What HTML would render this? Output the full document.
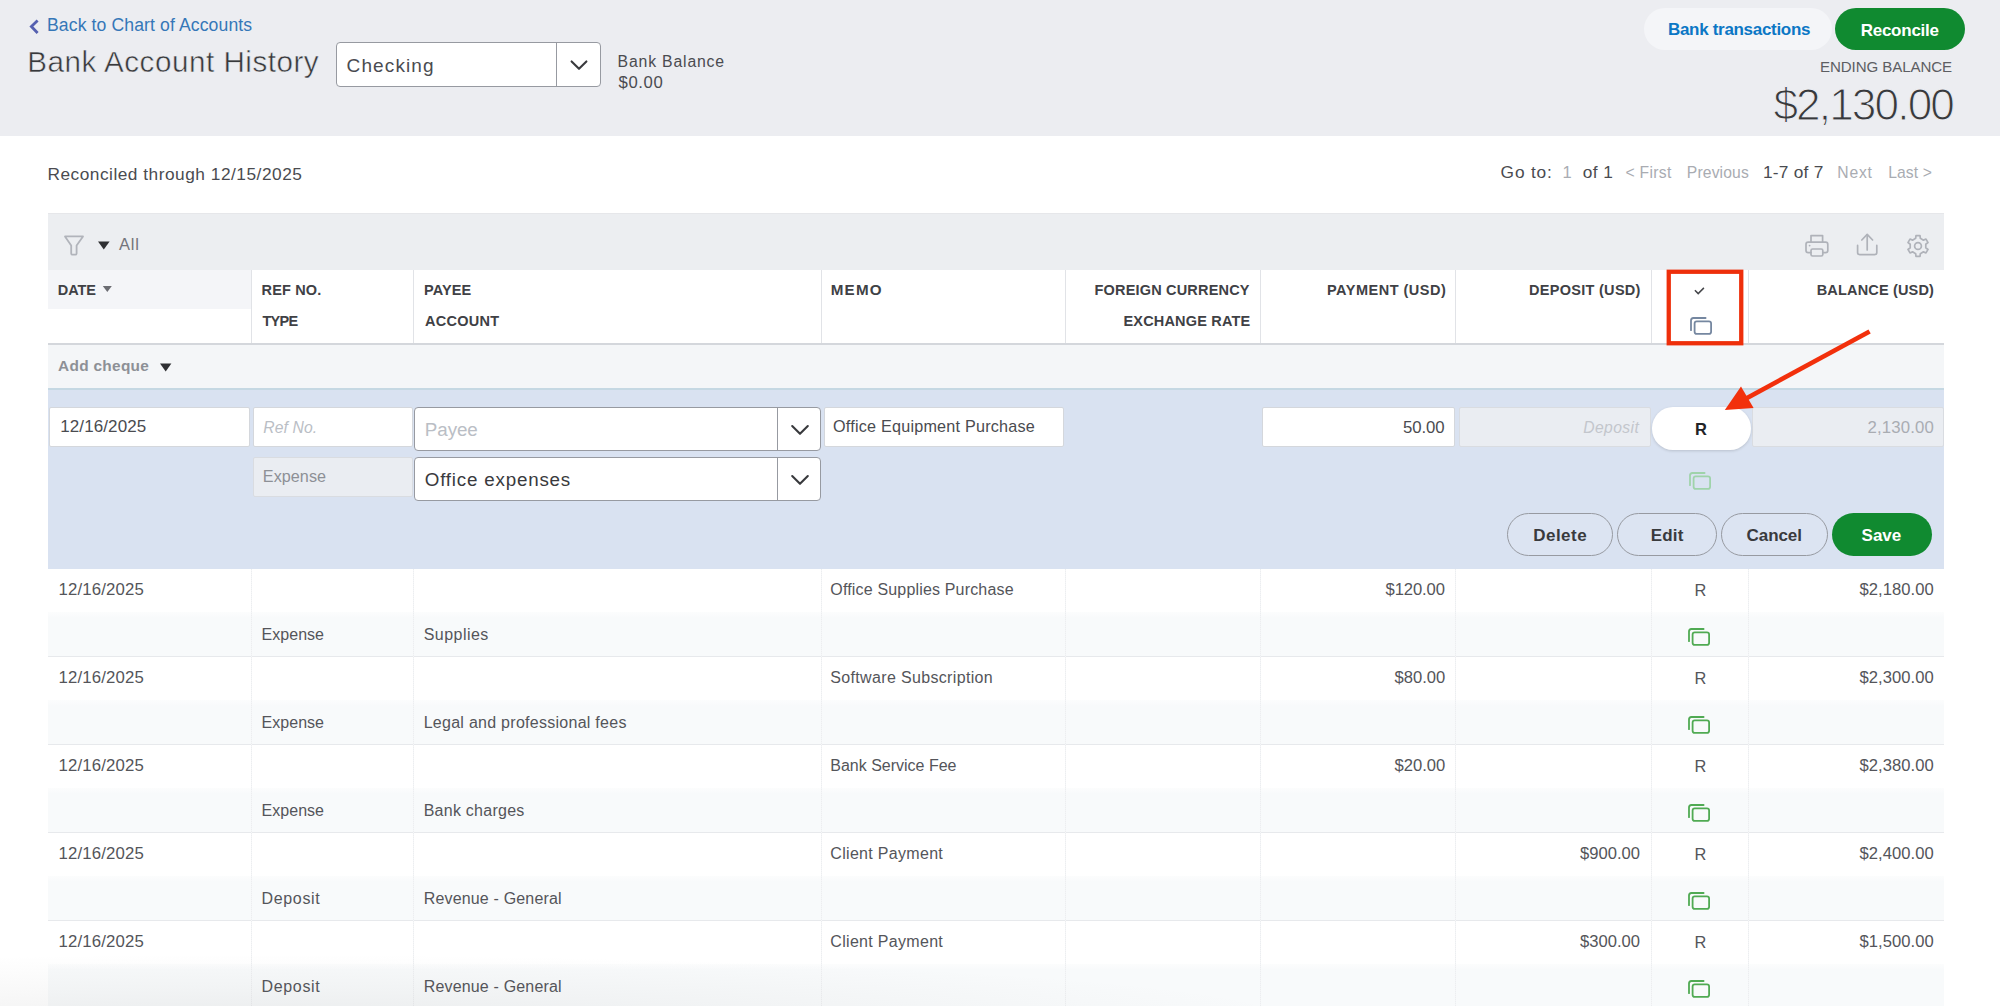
<!DOCTYPE html>
<html lang="en"><head><meta charset="utf-8"><title>Bank Account History</title>
<style>
html,body{margin:0;padding:0;background:#fff;overflow:hidden;}
#pg{position:relative;width:2000px;height:1006px;overflow:hidden;background:#fff;font-family:"Liberation Sans",sans-serif;}
.g{display:contents}
.b{position:absolute;display:block}
.t{position:absolute;display:block;white-space:pre}
</style></head>
<body><div id="pg">
<header class="g page-header">
<div class="b" style="left:0px;top:0px;width:2000px;height:136px;background:#ecedf1"></div>
<svg class="b" style="left:27px;top:17px" width="14" height="20" viewBox="0 0 14 20"><path d="M10.6 3.6 L4.4 9.6 L10.6 15.9" fill="none" stroke="#5560b0" stroke-width="2.8" stroke-linecap="butt" stroke-linejoin="miter"/></svg>
<div class="b" style="left:336px;top:42px;width:265px;height:45px;background:#fff;border:1px solid #979aa1;border-radius:4px;box-sizing:border-box"></div>
<div class="b" style="left:556px;top:43px;width:1px;height:43px;background:#979aa1"></div>
<svg class="b" style="left:568px;top:57px" width="22" height="16" viewBox="0 0 22 16"><path d="M3.6 4.4 L11 11.8 L18.4 4.4" fill="none" stroke="#393a3d" stroke-width="2.1" stroke-linecap="round" stroke-linejoin="round"/></svg>
<div class="b" style="left:1644px;top:8px;width:188px;height:42px;background:#f4f5f8;border-radius:21px"></div>
<div class="b" style="left:1835px;top:7.5px;width:130px;height:42.5px;background:#108a30;border-radius:21.5px"></div>
<span class="t" style='left:47.0px;top:17px;color:#3577b8;font:400 17.6px/17.6px "Liberation Sans", sans-serif;letter-spacing:0.11px;white-space:pre;'>Back to Chart of Accounts</span>
<span class="t" style='left:27.3px;top:47px;color:#38393c;font:400 29.6px/29.6px "Liberation Sans", sans-serif;letter-spacing:0.53px;white-space:pre;-webkit-text-stroke:0.5px #ecedf1;'>Bank Account History</span>
<span class="t" style='left:346.6px;top:56px;color:#4a4b50;font:400 19px/19px "Liberation Sans", sans-serif;letter-spacing:1.11px;white-space:pre;'>Checking</span>
<span class="t" style='left:617.6px;top:54px;color:#4a4b50;font:400 15.8px/15.8px "Liberation Sans", sans-serif;letter-spacing:0.82px;white-space:pre;'>Bank Balance</span>
<span class="t" style='left:618.6px;top:75px;color:#4a4b50;font:400 16.7px/16.7px "Liberation Sans", sans-serif;letter-spacing:0.6px;white-space:pre;'>$0.00</span>
<span class="t" style='left:1668.0px;top:21px;color:#0b77c5;font:700 17px/17px "Liberation Sans", sans-serif;letter-spacing:-0.31px;white-space:pre;'>Bank transactions</span>
<span class="t" style='left:1860.7px;top:22px;color:#ffffff;font:700 17px/17px "Liberation Sans", sans-serif;letter-spacing:-0.25px;white-space:pre;'>Reconcile</span>
<span class="t" style='left:1820.0px;top:59px;color:#5d5e63;font:400 15.1px/15.1px "Liberation Sans", sans-serif;letter-spacing:-0.1px;white-space:pre;'>ENDING BALANCE</span>
<span class="t" style='left:1773.4px;top:83px;color:#38393c;font:400 44.2px/44.2px "Liberation Sans", sans-serif;letter-spacing:-1.88px;white-space:pre;-webkit-text-stroke:1.1px #ecedf1;'>$2,130.00</span>
</header>
<nav class="g pager">

<span class="t" style='left:47.4px;top:166px;color:#4a4b50;font:400 17.3px/17.3px "Liberation Sans", sans-serif;letter-spacing:0.51px;white-space:pre;'>Reconciled through 12/15/2025</span>
<span class="t" style='left:1500.6px;top:164px;color:#4a4b50;font:400 17.3px/17.3px "Liberation Sans", sans-serif;letter-spacing:0.84px;white-space:pre;'>Go to:</span>
<span class="t" style='left:1562.5px;top:164px;color:#a9acb2;font:400 16.5px/16.5px "Liberation Sans", sans-serif;letter-spacing:0.0px;white-space:pre;'>1</span>
<span class="t" style='left:1582.7px;top:164px;color:#4a4b50;font:400 17.3px/17.3px "Liberation Sans", sans-serif;letter-spacing:0.43px;white-space:pre;'>of 1</span>
<span class="t" style='left:1625.4px;top:165px;color:#a9acb2;font:400 15.7px/15.7px "Liberation Sans", sans-serif;letter-spacing:0.32px;white-space:pre;'>&lt; First</span>
<span class="t" style='left:1686.8px;top:165px;color:#a9acb2;font:400 15.7px/15.7px "Liberation Sans", sans-serif;letter-spacing:0.14px;white-space:pre;'>Previous</span>
<span class="t" style='left:1762.9px;top:164px;color:#4a4b50;font:400 17.3px/17.3px "Liberation Sans", sans-serif;letter-spacing:0.26px;white-space:pre;'>1-7 of 7</span>
<span class="t" style='left:1837.3px;top:165px;color:#a9acb2;font:400 15.7px/15.7px "Liberation Sans", sans-serif;letter-spacing:0.8px;white-space:pre;'>Next</span>
<span class="t" style='left:1888.2px;top:165px;color:#a9acb2;font:400 15.7px/15.7px "Liberation Sans", sans-serif;letter-spacing:0.1px;white-space:pre;'>Last &gt;</span>
</nav>
<section class="g register-toolbar">
<div class="b" style="left:48px;top:213px;width:1896px;height:56.5px;background:#eceef1"></div>
<div class="b" style="left:48px;top:213px;width:1896px;height:1px;background:#e6e7ea"></div>
<svg class="b" style="left:62px;top:233px" width="24" height="25" viewBox="0 0 24 25"><path d="M3 3.4 H21 L14.6 12.4 V20.4 Q14.6 21.6 13.4 21.6 H10.4 Q9.2 21.6 9.2 20.4 V12.4 Z" fill="none" stroke="#b1b4bb" stroke-width="1.8" stroke-linejoin="round"/></svg>
<svg class="b" style="left:97px;top:240px" width="14" height="11" viewBox="0 0 14 11"><path d="M1 1.6 H12.6 L6.8 9.6 Z" fill="#2f3033"/></svg>
<svg class="b" style="left:1803px;top:232px" width="28" height="28" viewBox="0 0 28 28"><g fill="none" stroke="#afb2b9" stroke-width="1.7" stroke-linejoin="round" stroke-linecap="round"><path d="M8 10 V3.6 H19.6 V10"/><path d="M8 20.6 H5.2 Q3 20.6 3 18.4 V12.4 Q3 10.2 5.2 10.2 H22.6 Q24.8 10.2 24.8 12.4 V18.4 Q24.8 20.6 22.6 20.6 H19.8"/><rect x="8" y="17" width="11.8" height="7" rx="1.6"/></g><circle cx="6.6" cy="13.6" r="0.9" fill="#afb2b9"/></svg>
<svg class="b" style="left:1853px;top:230px" width="28" height="30" viewBox="0 0 28 30"><g fill="none" stroke="#afb2b9" stroke-width="1.7" stroke-linejoin="round" stroke-linecap="round"><path d="M4.6 15.4 V22.4 Q4.6 24.6 6.8 24.6 H21.6 Q23.8 24.6 23.8 22.4 V15.4"/><path d="M14.2 20 V4.8"/><path d="M8.8 10 L14.2 4.4 L19.6 10"/></g></svg>
<svg class="b" style="left:1903.5px;top:232px" width="28" height="28" viewBox="0 0 28 28"><g fill="none" stroke="#afb2b9" stroke-width="1.7" stroke-linejoin="round"><path d="M11.66 6.35 L11.98 3.59 L16.02 3.59 L16.34 6.35 L19.46 8.15 L22.00 7.05 L24.02 10.55 L21.79 12.20 L21.79 15.80 L24.02 17.45 L22.00 20.95 L19.46 19.85 L16.34 21.65 L16.02 24.41 L11.98 24.41 L11.66 21.65 L8.54 19.85 L6.00 20.95 L3.98 17.45 L6.21 15.80 L6.21 12.20 L3.98 10.55 L6.00 7.05 L8.54 8.15 Z"/><circle cx="14" cy="14" r="3.4"/></g></svg>
<span class="t" style='left:119.0px;top:236px;color:#74757b;font:400 16.5px/16.5px "Liberation Sans", sans-serif;letter-spacing:0.8px;white-space:pre;'>All</span>
</section>
<section class="g register-head">
<div class="b" style="left:48px;top:269.5px;width:1896px;height:73.5px;background:#fff"></div>
<div class="b" style="left:48px;top:269.5px;width:203px;height:39.0px;background:#f4f5f8"></div>
<div class="b" style="left:251px;top:270px;width:1px;height:73px;background:#e1e3e7"></div>
<div class="b" style="left:413px;top:270px;width:1px;height:73px;background:#e1e3e7"></div>
<div class="b" style="left:821px;top:270px;width:1px;height:73px;background:#e1e3e7"></div>
<div class="b" style="left:1064.5px;top:270px;width:1.0px;height:73px;background:#e1e3e7"></div>
<div class="b" style="left:1260px;top:270px;width:1px;height:73px;background:#e1e3e7"></div>
<div class="b" style="left:1455px;top:270px;width:1px;height:73px;background:#e1e3e7"></div>
<div class="b" style="left:1651px;top:270px;width:1px;height:73px;background:#e1e3e7"></div>
<div class="b" style="left:1748px;top:270px;width:1px;height:73px;background:#e1e3e7"></div>
<div class="b" style="left:48px;top:343px;width:1896px;height:2px;background:#d4d7dc"></div>
<svg class="b" style="left:102px;top:285px" width="11" height="8" viewBox="0 0 11 8"><path d="M0.8 1 H9.8 L5.3 7 Z" fill="#6b6c72"/></svg>
<svg class="b" style="left:1692px;top:285px" width="14" height="12" viewBox="0 0 14 12"><path d="M2.9 5.2 L6.2 8.6 L11.9 2.9" fill="none" stroke="#45464a" stroke-width="1.5"/></svg>
<svg class="b" style="left:1688px;top:315px;opacity:1" width="27" height="22" viewBox="-2 -2 27 22"><g fill="none" stroke="#7587a0" stroke-width="1.8" stroke-linecap="round" stroke-linejoin="round"><path d="M15.6 1 H3.4 Q1 1 1 3.4 V13.2"/><rect x="4.6" y="4.3" width="16.5" height="12.6" rx="2.2"/></g></svg>
<span class="t" style='left:57.8px;top:283px;color:#404145;font:700 14.5px/14.5px "Liberation Sans", sans-serif;letter-spacing:-0.08px;white-space:pre;'>DATE</span>
<span class="t" style='left:261.5px;top:283px;color:#404145;font:700 14.5px/14.5px "Liberation Sans", sans-serif;letter-spacing:0.17px;white-space:pre;'>REF NO.</span>
<span class="t" style='left:262.5px;top:314px;color:#404145;font:700 14.5px/14.5px "Liberation Sans", sans-serif;letter-spacing:-0.75px;white-space:pre;'>TYPE</span>
<span class="t" style='left:424.0px;top:283px;color:#404145;font:700 14.5px/14.5px "Liberation Sans", sans-serif;letter-spacing:0.12px;white-space:pre;'>PAYEE</span>
<span class="t" style='left:425.0px;top:314px;color:#404145;font:700 14.5px/14.5px "Liberation Sans", sans-serif;letter-spacing:0.25px;white-space:pre;'>ACCOUNT</span>
<span class="t" style='left:830.8px;top:282px;color:#404145;font:700 15.2px/15.2px "Liberation Sans", sans-serif;letter-spacing:1.17px;white-space:pre;'>MEMO</span>
<span class="t" style='left:1094.5px;top:283px;color:#404145;font:700 14.5px/14.5px "Liberation Sans", sans-serif;letter-spacing:0.18px;white-space:pre;'>FOREIGN CURRENCY</span>
<span class="t" style='left:1123.5px;top:314px;color:#404145;font:700 14.5px/14.5px "Liberation Sans", sans-serif;letter-spacing:0.17px;white-space:pre;'>EXCHANGE RATE</span>
<span class="t" style='left:1327.0px;top:283px;color:#404145;font:700 14.5px/14.5px "Liberation Sans", sans-serif;letter-spacing:0.5px;white-space:pre;'>PAYMENT (USD)</span>
<span class="t" style='left:1529.0px;top:283px;color:#404145;font:700 14.5px/14.5px "Liberation Sans", sans-serif;letter-spacing:0.29px;white-space:pre;'>DEPOSIT (USD)</span>
<span class="t" style='left:1816.7px;top:283px;color:#404145;font:700 14.5px/14.5px "Liberation Sans", sans-serif;letter-spacing:0.17px;white-space:pre;'>BALANCE (USD)</span>
</section>
<section class="g register-add">
<div class="b" style="left:48px;top:345px;width:1896px;height:43px;background:#f4f6f8"></div>
<svg class="b" style="left:159px;top:362px" width="14" height="11" viewBox="0 0 14 11"><path d="M1 1.6 H12.4 L6.7 9.4 Z" fill="#2f3033"/></svg>
<div class="b" style="left:48px;top:388px;width:1896px;height:3px;background:#c5d8e3"></div>
<span class="t" style='left:58.0px;top:358px;color:#8d9096;font:700 15.4px/15.4px "Liberation Sans", sans-serif;letter-spacing:0.31px;white-space:pre;'>Add cheque</span>
</section>
<section class="g register-edit">
<div class="b" style="left:48px;top:390px;width:1896px;height:178.5px;background:#d9e2f1"></div>
<div class="b" style="left:49px;top:407px;width:201px;height:40px;background:#fff;border:1px solid #d4d7dc;border-radius:2px;box-sizing:border-box"></div>
<div class="b" style="left:253px;top:407px;width:160px;height:40px;background:#fff;border:1px solid #d4d7dc;border-radius:2px;box-sizing:border-box"></div>
<div class="b" style="left:414px;top:407px;width:407px;height:44px;background:#fff;border:1px solid #979aa1;border-radius:4px;box-sizing:border-box"></div>
<div class="b" style="left:777px;top:408px;width:1px;height:42px;background:#979aa1"></div>
<div class="b" style="left:824px;top:407px;width:240px;height:40px;background:#fff;border:1px solid #d4d7dc;border-radius:2px;box-sizing:border-box"></div>
<div class="b" style="left:1262px;top:407px;width:193px;height:40px;background:#fff;border:1px solid #d4d7dc;border-radius:2px;box-sizing:border-box"></div>
<div class="b" style="left:1459px;top:407px;width:192px;height:40px;background:#eaedf2;border:1px solid #d9dce1;border-radius:2px;box-sizing:border-box"></div>
<div class="b" style="left:1752px;top:407px;width:192px;height:40px;background:#eaedf2;border:1px solid #d9dce1;border-radius:2px;box-sizing:border-box"></div>
<div class="b" style="left:253px;top:457px;width:160px;height:40px;background:#eaedf2;border:1px solid #d9dce1;border-radius:2px;box-sizing:border-box"></div>
<div class="b" style="left:414px;top:457px;width:407px;height:44px;background:#fff;border:1px solid #979aa1;border-radius:4px;box-sizing:border-box"></div>
<div class="b" style="left:777px;top:458px;width:1px;height:42px;background:#979aa1"></div>
<svg class="b" style="left:788.5px;top:422px" width="22" height="16" viewBox="0 0 22 16"><path d="M3.2 4 L11 11.8 L18.8 4" fill="none" stroke="#393a3d" stroke-width="2.1" stroke-linecap="round" stroke-linejoin="round"/></svg>
<svg class="b" style="left:788.5px;top:472.4px" width="22" height="16" viewBox="0 0 22 16"><path d="M3.2 4 L11 11.8 L18.8 4" fill="none" stroke="#393a3d" stroke-width="2.1" stroke-linecap="round" stroke-linejoin="round"/></svg>
<div class="b" style="left:1652px;top:407px;width:98.5px;height:42.5px;background:#fff;border-radius:21px;box-shadow:0 1px 3px rgba(0,0,0,0.15)"></div>
<svg class="b" style="left:1687.4px;top:470px;opacity:1" width="27" height="22" viewBox="-2 -2 27 22"><g fill="none" stroke="#9fd3aa" stroke-width="1.8" stroke-linecap="round" stroke-linejoin="round"><path d="M15.6 1 H3.4 Q1 1 1 3.4 V13.2"/><rect x="4.6" y="4.3" width="16.5" height="12.6" rx="2.2"/></g></svg>
<div class="b" style="left:1507px;top:513px;width:106px;height:42.5px;border:1px solid #979aa1;border-radius:21.5px;box-sizing:border-box;background:#dce4f2"></div>
<div class="b" style="left:1617px;top:513px;width:99.5px;height:42.5px;border:1px solid #979aa1;border-radius:21.5px;box-sizing:border-box;background:#dce4f2"></div>
<div class="b" style="left:1721px;top:513px;width:107px;height:42.5px;border:1px solid #979aa1;border-radius:21.5px;box-sizing:border-box;background:#dce4f2"></div>
<div class="b" style="left:1832px;top:512.5px;width:99.5px;height:43.0px;background:#108a30;border-radius:21.5px"></div>
<span class="t" style='left:60.2px;top:418px;color:#4a4b50;font:400 17px/17px "Liberation Sans", sans-serif;letter-spacing:0.11px;white-space:pre;'>12/16/2025</span>
<span class="t" style='left:263.2px;top:420px;color:#babec5;font:italic 400 15.7px/15.7px "Liberation Sans", sans-serif;letter-spacing:0.12px;white-space:pre;'>Ref No.</span>
<span class="t" style='left:424.8px;top:421px;color:#babec5;font:400 18.8px/18.8px "Liberation Sans", sans-serif;letter-spacing:-0.06px;white-space:pre;'>Payee</span>
<span class="t" style='left:833.0px;top:418px;color:#4a4b50;font:400 16.2px/16.2px "Liberation Sans", sans-serif;letter-spacing:0.21px;white-space:pre;'>Office Equipment Purchase</span>
<span class="t" style='left:1403.0px;top:420px;color:#4a4b50;font:400 16.8px/16.8px "Liberation Sans", sans-serif;letter-spacing:-0.12px;white-space:pre;'>50.00</span>
<span class="t" style='left:1583.3px;top:420px;color:#c3c6cc;font:italic 400 15.7px/15.7px "Liberation Sans", sans-serif;letter-spacing:0.38px;white-space:pre;'>Deposit</span>
<span class="t" style='left:1695.0px;top:421px;color:#222326;font:700 16.5px/16.5px "Liberation Sans", sans-serif;letter-spacing:0.0px;white-space:pre;'>R</span>
<span class="t" style='left:1867.5px;top:420px;color:#a9acb2;font:400 16.8px/16.8px "Liberation Sans", sans-serif;letter-spacing:0.14px;white-space:pre;'>2,130.00</span>
<span class="t" style='left:262.8px;top:468px;color:#8d9096;font:400 16.2px/16.2px "Liberation Sans", sans-serif;letter-spacing:0.04px;white-space:pre;'>Expense</span>
<span class="t" style='left:424.8px;top:471px;color:#393a3d;font:400 18.8px/18.8px "Liberation Sans", sans-serif;letter-spacing:0.79px;white-space:pre;'>Office expenses</span>
<span class="t" style='left:1533.2px;top:527px;color:#393a3d;font:700 17px/17px "Liberation Sans", sans-serif;letter-spacing:0.48px;white-space:pre;'>Delete</span>
<span class="t" style='left:1650.7px;top:527px;color:#393a3d;font:700 17px/17px "Liberation Sans", sans-serif;letter-spacing:0.17px;white-space:pre;'>Edit</span>
<span class="t" style='left:1746.6px;top:527px;color:#393a3d;font:700 17px/17px "Liberation Sans", sans-serif;letter-spacing:-0.08px;white-space:pre;'>Cancel</span>
<span class="t" style='left:1861.6px;top:527px;color:#ffffff;font:700 17px/17px "Liberation Sans", sans-serif;letter-spacing:-0.03px;white-space:pre;'>Save</span>
</section>
<section class="g register-rows">
<div class="b" style="left:48px;top:611.5px;width:1896px;height:44.0px;background:linear-gradient(to bottom,#fcfdfd 0,#f8fafb 6px)"></div>
<div class="b" style="left:48px;top:655.5px;width:1896px;height:1.0px;background:#e7e9ec"></div>
<svg class="b" style="left:1685.6px;top:625.6px;opacity:1" width="27" height="22" viewBox="-2 -2 27 22"><g fill="none" stroke="#50aa53" stroke-width="1.8" stroke-linecap="round" stroke-linejoin="round"><path d="M15.6 1 H3.4 Q1 1 1 3.4 V13.2"/><rect x="4.6" y="4.3" width="16.5" height="12.6" rx="2.2"/></g></svg>
<div class="b" style="left:48px;top:699.5px;width:1896px;height:44.0px;background:linear-gradient(to bottom,#fcfdfd 0,#f8fafb 6px)"></div>
<div class="b" style="left:48px;top:743.5px;width:1896px;height:1.0px;background:#e7e9ec"></div>
<svg class="b" style="left:1685.6px;top:713.6px;opacity:1" width="27" height="22" viewBox="-2 -2 27 22"><g fill="none" stroke="#50aa53" stroke-width="1.8" stroke-linecap="round" stroke-linejoin="round"><path d="M15.6 1 H3.4 Q1 1 1 3.4 V13.2"/><rect x="4.6" y="4.3" width="16.5" height="12.6" rx="2.2"/></g></svg>
<div class="b" style="left:48px;top:787.5px;width:1896px;height:44.0px;background:linear-gradient(to bottom,#fcfdfd 0,#f8fafb 6px)"></div>
<div class="b" style="left:48px;top:831.5px;width:1896px;height:1.0px;background:#e7e9ec"></div>
<svg class="b" style="left:1685.6px;top:801.6px;opacity:1" width="27" height="22" viewBox="-2 -2 27 22"><g fill="none" stroke="#50aa53" stroke-width="1.8" stroke-linecap="round" stroke-linejoin="round"><path d="M15.6 1 H3.4 Q1 1 1 3.4 V13.2"/><rect x="4.6" y="4.3" width="16.5" height="12.6" rx="2.2"/></g></svg>
<div class="b" style="left:48px;top:875.5px;width:1896px;height:44.0px;background:linear-gradient(to bottom,#fcfdfd 0,#f8fafb 6px)"></div>
<div class="b" style="left:48px;top:919.5px;width:1896px;height:1.0px;background:#e7e9ec"></div>
<svg class="b" style="left:1685.6px;top:889.6px;opacity:1" width="27" height="22" viewBox="-2 -2 27 22"><g fill="none" stroke="#50aa53" stroke-width="1.8" stroke-linecap="round" stroke-linejoin="round"><path d="M15.6 1 H3.4 Q1 1 1 3.4 V13.2"/><rect x="4.6" y="4.3" width="16.5" height="12.6" rx="2.2"/></g></svg>
<div class="b" style="left:48px;top:963.5px;width:1896px;height:44.0px;background:linear-gradient(to bottom,#fcfdfd 0,#f8fafb 6px)"></div>
<div class="b" style="left:48px;top:1007.5px;width:1896px;height:1.0px;background:#e7e9ec"></div>
<svg class="b" style="left:1685.6px;top:977.6px;opacity:1" width="27" height="22" viewBox="-2 -2 27 22"><g fill="none" stroke="#50aa53" stroke-width="1.8" stroke-linecap="round" stroke-linejoin="round"><path d="M15.6 1 H3.4 Q1 1 1 3.4 V13.2"/><rect x="4.6" y="4.3" width="16.5" height="12.6" rx="2.2"/></g></svg>
<div class="b" style="left:251px;top:568.5px;width:1px;height:437.5px;background:repeating-linear-gradient(to bottom,#eceef0 0 1px,#f4f5f7 1px 2px)"></div>
<div class="b" style="left:413px;top:568.5px;width:1px;height:437.5px;background:repeating-linear-gradient(to bottom,#eceef0 0 1px,#f4f5f7 1px 2px)"></div>
<div class="b" style="left:821px;top:568.5px;width:1px;height:437.5px;background:repeating-linear-gradient(to bottom,#eceef0 0 1px,#f4f5f7 1px 2px)"></div>
<div class="b" style="left:1064.5px;top:568.5px;width:1.0px;height:437.5px;background:repeating-linear-gradient(to bottom,#eceef0 0 1px,#f4f5f7 1px 2px)"></div>
<div class="b" style="left:1260px;top:568.5px;width:1px;height:437.5px;background:repeating-linear-gradient(to bottom,#eceef0 0 1px,#f4f5f7 1px 2px)"></div>
<div class="b" style="left:1455px;top:568.5px;width:1px;height:437.5px;background:repeating-linear-gradient(to bottom,#eceef0 0 1px,#f4f5f7 1px 2px)"></div>
<div class="b" style="left:1651px;top:568.5px;width:1px;height:437.5px;background:repeating-linear-gradient(to bottom,#eceef0 0 1px,#f4f5f7 1px 2px)"></div>
<div class="b" style="left:1748px;top:568.5px;width:1px;height:437.5px;background:repeating-linear-gradient(to bottom,#eceef0 0 1px,#f4f5f7 1px 2px)"></div>
<span class="t" style='left:58.5px;top:582px;color:#54555a;font:400 16.8px/16.8px "Liberation Sans", sans-serif;letter-spacing:0.14px;white-space:pre;'>12/16/2025</span>
<span class="t" style='left:830.3px;top:582px;color:#54555a;font:400 16px/16px "Liberation Sans", sans-serif;letter-spacing:0.17px;white-space:pre;'>Office Supplies Purchase</span>
<span class="t" style='left:1385.5px;top:582px;color:#54555a;font:400 16.6px/16.6px "Liberation Sans", sans-serif;letter-spacing:-0.1px;white-space:pre;'>$120.00</span>
<span class="t" style='left:1694.6px;top:582px;color:#54555a;font:400 16.4px/16.4px "Liberation Sans", sans-serif;letter-spacing:0.0px;white-space:pre;'>R</span>
<span class="t" style='left:1859.5px;top:582px;color:#54555a;font:400 16.6px/16.6px "Liberation Sans", sans-serif;letter-spacing:0.06px;white-space:pre;'>$2,180.00</span>
<span class="t" style='left:261.5px;top:627px;color:#54555a;font:400 16px/16px "Liberation Sans", sans-serif;letter-spacing:0.04px;white-space:pre;'>Expense</span>
<span class="t" style='left:423.7px;top:627px;color:#54555a;font:400 16px/16px "Liberation Sans", sans-serif;letter-spacing:0.47px;white-space:pre;'>Supplies</span>
<span class="t" style='left:58.5px;top:670px;color:#54555a;font:400 16.8px/16.8px "Liberation Sans", sans-serif;letter-spacing:0.14px;white-space:pre;'>12/16/2025</span>
<span class="t" style='left:830.3px;top:670px;color:#54555a;font:400 16px/16px "Liberation Sans", sans-serif;letter-spacing:0.34px;white-space:pre;'>Software Subscription</span>
<span class="t" style='left:1394.5px;top:670px;color:#54555a;font:400 16.6px/16.6px "Liberation Sans", sans-serif;letter-spacing:0.0px;white-space:pre;'>$80.00</span>
<span class="t" style='left:1694.6px;top:670px;color:#54555a;font:400 16.4px/16.4px "Liberation Sans", sans-serif;letter-spacing:0.0px;white-space:pre;'>R</span>
<span class="t" style='left:1859.5px;top:670px;color:#54555a;font:400 16.6px/16.6px "Liberation Sans", sans-serif;letter-spacing:0.06px;white-space:pre;'>$2,300.00</span>
<span class="t" style='left:261.5px;top:715px;color:#54555a;font:400 16px/16px "Liberation Sans", sans-serif;letter-spacing:0.04px;white-space:pre;'>Expense</span>
<span class="t" style='left:423.7px;top:715px;color:#54555a;font:400 16px/16px "Liberation Sans", sans-serif;letter-spacing:0.27px;white-space:pre;'>Legal and professional fees</span>
<span class="t" style='left:58.5px;top:758px;color:#54555a;font:400 16.8px/16.8px "Liberation Sans", sans-serif;letter-spacing:0.14px;white-space:pre;'>12/16/2025</span>
<span class="t" style='left:830.3px;top:758px;color:#54555a;font:400 16px/16px "Liberation Sans", sans-serif;letter-spacing:-0.01px;white-space:pre;'>Bank Service Fee</span>
<span class="t" style='left:1394.5px;top:758px;color:#54555a;font:400 16.6px/16.6px "Liberation Sans", sans-serif;letter-spacing:0.0px;white-space:pre;'>$20.00</span>
<span class="t" style='left:1694.6px;top:758px;color:#54555a;font:400 16.4px/16.4px "Liberation Sans", sans-serif;letter-spacing:0.0px;white-space:pre;'>R</span>
<span class="t" style='left:1859.5px;top:758px;color:#54555a;font:400 16.6px/16.6px "Liberation Sans", sans-serif;letter-spacing:0.06px;white-space:pre;'>$2,380.00</span>
<span class="t" style='left:261.5px;top:803px;color:#54555a;font:400 16px/16px "Liberation Sans", sans-serif;letter-spacing:0.04px;white-space:pre;'>Expense</span>
<span class="t" style='left:423.7px;top:803px;color:#54555a;font:400 16px/16px "Liberation Sans", sans-serif;letter-spacing:0.25px;white-space:pre;'>Bank charges</span>
<span class="t" style='left:58.5px;top:846px;color:#54555a;font:400 16.8px/16.8px "Liberation Sans", sans-serif;letter-spacing:0.14px;white-space:pre;'>12/16/2025</span>
<span class="t" style='left:830.3px;top:846px;color:#54555a;font:400 16px/16px "Liberation Sans", sans-serif;letter-spacing:0.31px;white-space:pre;'>Client Payment</span>
<span class="t" style='left:1580.0px;top:846px;color:#54555a;font:400 16.6px/16.6px "Liberation Sans", sans-serif;letter-spacing:0.0px;white-space:pre;'>$900.00</span>
<span class="t" style='left:1694.6px;top:846px;color:#54555a;font:400 16.4px/16.4px "Liberation Sans", sans-serif;letter-spacing:0.0px;white-space:pre;'>R</span>
<span class="t" style='left:1859.5px;top:846px;color:#54555a;font:400 16.6px/16.6px "Liberation Sans", sans-serif;letter-spacing:0.06px;white-space:pre;'>$2,400.00</span>
<span class="t" style='left:261.5px;top:891px;color:#54555a;font:400 16px/16px "Liberation Sans", sans-serif;letter-spacing:0.67px;white-space:pre;'>Deposit</span>
<span class="t" style='left:423.7px;top:891px;color:#54555a;font:400 16px/16px "Liberation Sans", sans-serif;letter-spacing:0.17px;white-space:pre;'>Revenue - General</span>
<span class="t" style='left:58.5px;top:934px;color:#54555a;font:400 16.8px/16.8px "Liberation Sans", sans-serif;letter-spacing:0.14px;white-space:pre;'>12/16/2025</span>
<span class="t" style='left:830.3px;top:934px;color:#54555a;font:400 16px/16px "Liberation Sans", sans-serif;letter-spacing:0.31px;white-space:pre;'>Client Payment</span>
<span class="t" style='left:1580.0px;top:934px;color:#54555a;font:400 16.6px/16.6px "Liberation Sans", sans-serif;letter-spacing:0.0px;white-space:pre;'>$300.00</span>
<span class="t" style='left:1694.6px;top:934px;color:#54555a;font:400 16.4px/16.4px "Liberation Sans", sans-serif;letter-spacing:0.0px;white-space:pre;'>R</span>
<span class="t" style='left:1859.5px;top:934px;color:#54555a;font:400 16.6px/16.6px "Liberation Sans", sans-serif;letter-spacing:0.06px;white-space:pre;'>$1,500.00</span>
<span class="t" style='left:261.5px;top:979px;color:#54555a;font:400 16px/16px "Liberation Sans", sans-serif;letter-spacing:0.67px;white-space:pre;'>Deposit</span>
<span class="t" style='left:423.7px;top:979px;color:#54555a;font:400 16px/16px "Liberation Sans", sans-serif;letter-spacing:0.17px;white-space:pre;'>Revenue - General</span>
</section>
<div class="g overlays">
<div class="b" style="left:0px;top:940px;width:2000px;height:66px;background:radial-gradient(ellipse 1050px 66px at 260px 80px,rgba(90,90,90,0.085),rgba(90,90,90,0.045) 45%,rgba(90,90,90,0) 100%)"></div>
<svg class="b" style="left:0;top:0;pointer-events:none" width="2000" height="1006" viewBox="0 0 2000 1006"><rect x="1668.75" y="271.75" width="72.5" height="71.5" fill="none" stroke="#ee2f0b" stroke-width="4.3"/><path d="M1869.6 331.4 L1742 400.8" stroke="#f2300c" stroke-width="4.6" fill="none"/><path d="M1724.8 410 L1741 386.4 L1753.6 408 Z" fill="#f2300c"/></svg>

</div>
</div></body></html>
